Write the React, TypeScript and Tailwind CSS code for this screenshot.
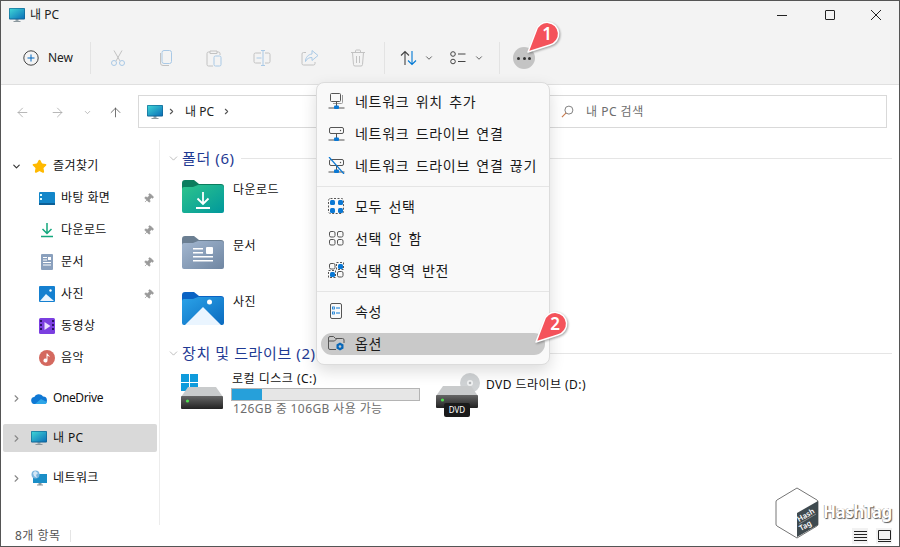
import type { ReactNode } from "react";
import { ChevronDown, ChevronRight, ArrowLeft, ArrowRight, ArrowUp, Pin, Star } from "lucide-react";

function PcIcon({ id, className }: { id: string; className: string }) {
  return (
    <svg viewBox="0 0 16 16" className={className}>
      <defs>
        <linearGradient id={id} x1="0" y1="0" x2="1" y2="1">
          <stop offset="0" stopColor="#3fd6d6" />
          <stop offset="1" stopColor="#0b6fb8" />
        </linearGradient>
      </defs>
      <path d="M6.5 12h3v2h-3z" fill="#9aa7ad" />
      <path d="M4.5 14h7v1h-7z" fill="#8b979d" />
      <rect x="0" y="1" width="16" height="11.5" rx="1" fill="#0f5f8f" />
      <rect x="0.6" y="1.6" width="14.8" height="10" fill={`url(#${id})`} />
    </svg>
  );
}

function FolderIcon({ id, tab, from, to, children }: { id: string; tab: string; from: string; to: string; children: ReactNode }) {
  return (
    <svg viewBox="0 0 42 33" className="w-[42px] h-[33px] shrink-0">
      <defs>
        <linearGradient id={id} x1="0" y1="0" x2="1" y2="1">
          <stop offset="0" stopColor={from} />
          <stop offset="1" stopColor={to} />
        </linearGradient>
      </defs>
      <path d="M0 3a3 3 0 0 1 3-3h9l5 4h22a3 3 0 0 1 3 3v6H0z" fill={tab} />
      <path d="M0 9a2 2 0 0 1 2-2h9l5-2h23a3 3 0 0 1 3 3v23a2 2 0 0 1-2 2H2a2 2 0 0 1-2-2z" fill={`url(#${id})`} />
      {children}
    </svg>
  );
}

function DriveIcon({ children }: { children?: ReactNode }) {
  return (
    <svg viewBox="0 0 42 24" className="w-[42px] h-[24px] absolute left-0 bottom-0">
      <defs>
        <linearGradient id="drive-front" x1="0" y1="0" x2="0" y2="1">
          <stop offset="0" stopColor="#666" />
          <stop offset="1" stopColor="#222" />
        </linearGradient>
      </defs>
      <path d="M7 1h28l7 10H0z" fill="#c9cbcc" />
      <rect x="0" y="10" width="42" height="13" rx="1" fill="url(#drive-front)" />
      <circle cx="6.500" cy="15" r="1.600" fill="#4fe04f" />
      {children}
    </svg>
  );
}

function Badge({ num, className }: { num: string; className: string }) {
  return (
    <div className={`absolute w-[40px] h-[38px] ${className}`}>
      <svg viewBox="0 0 40 38" className="w-[40px] h-[38px] drop-shadow-[1px_1px_1px_rgba(0,0,0,0.35)]">
        <path d="M14 12A11.500 11.500 0 1 1 28 26L6 33Z" fill="#f4535b" stroke="#fff" strokeWidth="1.500" strokeLinejoin="round" />
      </svg>
      <span className="absolute left-[14px] top-[4px] w-[22px] text-center text-white text-[17px] font-semibold leading-[22px]">{num}</span>
    </div>
  );
}

function ToolIcon({ children, className = "" }: { children: ReactNode; className?: string }) {
  return (
    <svg viewBox="0 0 18 18" fill="none" strokeWidth="1" className={`w-[18px] h-[18px] shrink-0 ${className}`}>
      {children}
    </svg>
  );
}

function Divider() {
  return <div className="w-px h-[32px] bg-[#e3e3e3] shrink-0" />;
}

function ToolSlot({ children }: { children: ReactNode }) {
  return <div className="w-[48px] flex justify-center shrink-0">{children}</div>;
}

function Toolbar() {
  return (
    <div className="h-[55px] pt-[3px] flex items-center pl-[22px] shrink-0">
      <svg viewBox="0 0 16 16" className="w-[16px] h-[16px] shrink-0" fill="none">
        <circle cx="8" cy="8" r="7.200" stroke="#444" />
        <path d="M8 4.500v7M4.500 8h7" stroke="#0067c0" />
      </svg>
      <span className="ml-[9px] w-[42px] text-[12px] text-[#222] tracking-[-0.1px]">New</span>
      <Divider />
      <div className="flex ml-[3px]">
        <ToolSlot>
          <ToolIcon>
            <path d="M5 1.500L11 12M13 1.500L7 12" stroke="#c2c2c2" />
            <circle cx="5" cy="14" r="2.500" stroke="#a9c9e6" />
            <circle cx="13" cy="14" r="2.500" stroke="#a9c9e6" />
          </ToolIcon>
        </ToolSlot>
        <ToolSlot>
          <ToolIcon>
            <rect x="5" y="1.500" width="9.500" height="13" rx="2" stroke="#a9c9e6" />
            <path d="M3.500 4v10a2.500 2.500 0 0 0 2.500 2.500h6" stroke="#c2c2c2" />
          </ToolIcon>
        </ToolSlot>
        <ToolSlot>
          <ToolIcon>
            <path d="M5 3H3.500A1.500 1.500 0 0 0 2 4.500v11A1.500 1.500 0 0 0 3.500 17H8M12 3h1.500A1.500 1.500 0 0 1 15 4.500V6M5 2h7v2.500H5z" stroke="#c2c2c2" />
            <rect x="9" y="7" width="7" height="10" rx="1.500" stroke="#a9c9e6" />
          </ToolIcon>
        </ToolSlot>
        <ToolSlot>
          <ToolIcon>
            <path d="M8 4H2.500A1.500 1.500 0 0 0 1 5.500v7A1.500 1.500 0 0 0 2.500 14H8M12 4h3.500A1.500 1.500 0 0 1 17 5.500v7a1.500 1.500 0 0 1-1.500 1.500H12" stroke="#c2c2c2" />
            <path d="M8 1.500h4M8 16.500h4M10 1.500v15M3.500 9h5" stroke="#a9c9e6" />
          </ToolIcon>
        </ToolSlot>
        <ToolSlot>
          <ToolIcon>
            <path d="M5 3.500H2.500A1.500 1.500 0 0 0 1 5v9.500A1.500 1.500 0 0 0 2.500 16h10a1.500 1.500 0 0 0 1.500-1.500V13" stroke="#c2c2c2" />
            <path d="M11 1.500l6 5-6 5V8.500c-3 0-5 1-6.500 4 0-4 2.500-7 6.500-7.500z" stroke="#a9c9e6" />
          </ToolIcon>
        </ToolSlot>
        <ToolSlot>
          <ToolIcon>
            <path d="M2 3.500h14M6.500 3.500V2a1 1 0 0 1 1-1h3a1 1 0 0 1 1 1v1.500M3.500 3.500l1 12a1.500 1.500 0 0 0 1.500 1.500h6a1.500 1.500 0 0 0 1.500-1.500l1-12M7.500 7v7M10.500 7v7" stroke="#c2c2c2" />
          </ToolIcon>
        </ToolSlot>
      </div>
      <div className="ml-[2px]">
        <Divider />
      </div>
      <div className="flex items-center ml-[15px]">
        <svg viewBox="0 0 18 16" className="w-[18px] h-[16px]" fill="none">
          <path d="M5 15V1.500M1 5.500l4-4 4 4" stroke="#444" strokeWidth="1.100" />
          <path d="M12 1v13.500M8 10.500l4 4 4-4" stroke="#0078d4" strokeWidth="1.100" />
        </svg>
        <ChevronDown className="w-[10px] h-[10px] ml-[6px] text-[#444]" strokeWidth={2} />
        <svg viewBox="0 0 16 14" className="w-[16px] h-[14px] ml-[16px]" fill="none" stroke="#444">
          <circle cx="3" cy="3" r="2.300" />
          <circle cx="3" cy="10.500" r="2.300" />
          <path d="M8 3h7.500M8 10.500h7.500" />
        </svg>
        <ChevronDown className="w-[10px] h-[10px] ml-[8px] text-[#444]" strokeWidth={2} />
      </div>
      <div className="ml-[15px]">
        <Divider />
      </div>
      <div className="ml-[13px] w-[22px] h-[22px] rounded-full bg-[#c4c4c4] flex items-center justify-center gap-[2.500px]">
        <span className="w-[3px] h-[3px] rounded-full bg-[#333]" />
        <span className="w-[3px] h-[3px] rounded-full bg-[#333]" />
        <span className="w-[3px] h-[3px] rounded-full bg-[#333]" />
      </div>
    </div>
  );
}

function AddressRow() {
  return (
    <div className="h-[55px] flex items-start pt-[10px] shrink-0 bg-white">
      <div className="flex items-center h-[33px] pt-[1px] pl-[14px] w-[137px] shrink-0">
        <ArrowLeft className="w-[15px] h-[15px] text-[#a8a8a8]" strokeWidth={1.300} />
        <ArrowRight className="w-[15px] h-[15px] ml-[20px] text-[#a8a8a8]" strokeWidth={1.300} />
        <ChevronDown className="w-[9px] h-[9px] ml-[18px] text-[#a8a8a8]" strokeWidth={2} />
        <ArrowUp className="w-[15px] h-[15px] ml-[16px] text-[#555]" strokeWidth={1.300} />
      </div>
      <div className="flex items-center h-[33px] w-[412px] border border-[#d9d9d9] border-r-0 pl-[8px] shrink-0">
        <PcIcon id="pc-address" className="w-[16px] h-[16px]" />
        <ChevronRight className="w-[9px] h-[9px] ml-[4px] text-[#555]" strokeWidth={3} />
        <span className="ml-[9px] text-[12px] text-[#222]">내 PC</span>
        <ChevronRight className="w-[9px] h-[9px] ml-[8px] text-[#555]" strokeWidth={3} />
      </div>
      <div className="flex items-center h-[33px] w-[337px] border border-[#d9d9d9] border-l-0 pl-[11px] shrink-0">
        <svg viewBox="0 0 14 14" className="w-[13px] h-[13px]" fill="none">
          <circle cx="8.500" cy="5.500" r="4.300" stroke="#777" />
          <path d="M5.500 8.500L1 13" stroke="#c9794a" strokeWidth="1.200" />
        </svg>
        <span className="ml-[12px] text-[12px] text-[#6d6d6d] tracking-[0.5px]">내 PC 검색</span>
      </div>
    </div>
  );
}

function NavRow({ icon, label, chevron, pinned, active, indent }: { icon: ReactNode; label: string; chevron?: "down" | "right"; pinned?: boolean; active?: boolean; indent?: boolean }) {
  return (
    <div className="h-[32px] flex items-center relative">
      {active && <div className="absolute left-[2px] right-[2px] top-[2px] h-[28px] rounded-[2px] bg-[#d9d9d9]" />}
      <div className={`relative flex items-center ${indent ? "pl-[38px]" : "pl-[10px]"}`}>
        {chevron === "down" && <ChevronDown className="w-[11px] h-[11px] text-[#333] mr-[9px]" strokeWidth={2.500} />}
        {chevron === "right" && <ChevronRight className="w-[11px] h-[11px] text-[#888] mr-[9px]" strokeWidth={2.500} />}
        {icon}
        <span className={`text-[12px] text-[#111] ml-[6px] ${label === "OneDrive" ? "tracking-[-0.4px]" : "tracking-[0.4px]"}`}>{label}</span>
      </div>
      {pinned && <Pin className="absolute right-[5px] w-[11px] h-[11px] text-[#9a9a9a] fill-[#9a9a9a] rotate-45" strokeWidth={1.500} />}
    </div>
  );
}

function Sidebar() {
  return (
    <div className="w-[159px] shrink-0 border-r border-[#ececec] pt-[10px] bg-white">
      <NavRow chevron="down" label="즐겨찾기" icon={<Star className="ml-[1px] w-[15px] h-[15px] text-[#ffb900] fill-[#ffb900]" />} />
      <NavRow
        indent
        pinned
        label="바탕 화면"
        icon={
          <svg viewBox="0 0 16 13" className="w-[16px] h-[13px]">
            <rect width="16" height="13" rx="1" fill="#1286c9" />
            <rect x="1" y="2" width="2" height="2" fill="#dff" />
            <rect x="1" y="6" width="2" height="2" fill="#dff" />
            <rect y="11" width="16" height="2" fill="#0c5f96" />
          </svg>
        }
      />
      <NavRow
        indent
        pinned
        label="다운로드"
        icon={
          <svg viewBox="0 0 16 16" className="w-[16px] h-[16px]" fill="none" stroke="#14a87e" strokeWidth="1.500">
            <path d="M8 1v10M3.500 7l4.500 4.500L12.500 7M2 14.500h12" />
          </svg>
        }
      />
      <NavRow
        indent
        pinned
        label="문서"
        icon={
          <svg viewBox="0 0 16 16" className="w-[16px] h-[16px]">
            <rect x="2" width="12" height="16" rx="1" fill="#8aa0bd" />
            <path d="M4 3h4v1H4zM4 5.500h4v1H4zM4 8h8v1H4zM4 10.500h8v1H4z" fill="#fff" />
            <rect x="9" y="3" width="3" height="3" fill="#fff" />
          </svg>
        }
      />
      <NavRow
        indent
        pinned
        label="사진"
        icon={
          <svg viewBox="0 0 16 16" className="w-[16px] h-[16px]">
            <rect width="16" height="16" rx="1" fill="#1580d0" />
            <path d="M1 15l6-7 8 7z" fill="#eaf5ff" />
            <circle cx="11.500" cy="4.500" r="1.200" fill="#fff" />
          </svg>
        }
      />
      <NavRow
        indent
        label="동영상"
        icon={
          <svg viewBox="0 0 16 16" className="w-[16px] h-[16px]">
            <rect width="16" height="16" rx="1.500" fill="#7b3fe0" />
            <path d="M5.500 4v8l6-4z" fill="#e9ddff" />
            <path d="M1 2h2v2H1zM1 6h2v2H1zM1 10h2v2H1zM13 2h2v2h-2zM13 6h2v2h-2zM13 10h2v2h-2z" fill="#2a1266" />
          </svg>
        }
      />
      <NavRow
        indent
        label="음악"
        icon={
          <svg viewBox="0 0 16 16" className="w-[16px] h-[16px]">
            <circle cx="8" cy="8" r="8" fill="#d4695f" />
            <path d="M7.500 3.500h1v7a2 2 0 1 1-1-1.700zM8.500 3.500c.5 1.500 2 2 2.500 3.500-1-.7-2-1-2.500-1z" fill="#fff" />
          </svg>
        }
      />
      <div className="h-[8px]" />
      <NavRow
        chevron="right"
        label="OneDrive"
        icon={
          <svg viewBox="0 0 16 11" className="w-[16px] h-[11px]">
            <path d="M4 11a3.500 3.500 0 0 1-.6-7A5 5 0 0 1 12 3.500 3.800 3.800 0 0 1 13 11z" fill="#0f78d4" />
            <path d="M4 11l6-5 6 3a2.500 2.500 0 0 1-3 2z" fill="#2ea6e8" />
          </svg>
        }
      />
      <div className="h-[8px]" />
      <NavRow chevron="right" active label="내 PC" icon={<PcIcon id="pc-nav" className="w-[16px] h-[16px]" />} />
      <div className="h-[8px]" />
      <NavRow
        chevron="right"
        label="네트워크"
        icon={
          <svg viewBox="0 0 16 16" className="w-[16px] h-[16px]">
            <rect x="2" y="4" width="14" height="9" fill="#1a8ec7" />
            <path d="M7.500 13h3v1.500h-3zM6 14.500h6v1H6z" fill="#8b979d" />
            <circle cx="4.500" cy="4.500" r="4" fill="#7cb5de" />
            <path d="M2 3l2-2 3 2-2 2 1 3-3-2z" fill="#d5e7f5" />
          </svg>
        }
      />
    </div>
  );
}

function SectionHeader({ title }: { title: string }) {
  return (
    <div className="h-[20px] flex items-center">
      <ChevronDown className="w-[13px] h-[13px] text-[#9a9a9a] ml-[7px] mr-[2px] shrink-0" strokeWidth={1.200} />
      <span className="text-[15px] text-[#1f3a93] whitespace-nowrap tracking-[0.6px]">{title}</span>
      <div className="flex-1 h-px bg-[#e5e5e5] ml-[6px]" />
    </div>
  );
}

function FolderRow({ label, icon }: { label: string; icon: ReactNode }) {
  return (
    <div className="h-[56px] flex pl-[22px]">
      <div className="mt-[13px]">{icon}</div>
      <span className="ml-[9px] mt-[15px] text-[12px] text-[#111] leading-[16px] tracking-[0.5px]">{label}</span>
    </div>
  );
}

function Content() {
  return (
    <div className="flex-1 pt-[8px] pr-[7px] bg-white min-w-0">
      <SectionHeader title="폴더 (6)" />
      <div className="-mt-[1px] h-[175px]">
        <FolderRow
          label="다운로드"
          icon={
            <FolderIcon id="f-dl" tab="#0b7d5e" from="#2ec48c" to="#00989c">
              <path d="M21 12v12M15.500 18.500l5.500 5.500 5.500-5.500M14 28h14" stroke="#fff" strokeWidth="1.800" fill="none" />
            </FolderIcon>
          }
        />
        <FolderRow
          label="문서"
          icon={
            <FolderIcon id="f-doc" tab="#6b7f92" from="#a3b7d0" to="#6f86a2">
              <path d="M11 12h10v1.500H11zM11 16h10v1.500H11zM11 20h20v1.500H11zM11 24h20v1.500H11z" fill="#fff" />
              <rect x="24" y="11" width="7" height="7" rx="1" fill="#fff" />
            </FolderIcon>
          }
        />
        <FolderRow
          label="사진"
          icon={
            <FolderIcon id="f-pic" tab="#0a63c4" from="#2ba3e8" to="#0a6abf">
              <path d="M3 33l18-18 18 18z" fill="#eaf5ff" />
              <circle cx="27.500" cy="10" r="2.500" fill="#fff" />
            </FolderIcon>
          }
        />
      </div>
      <div className="mt-[1px]">
        <SectionHeader title="장치 및 드라이브 (2)" />
      </div>
      <div className="flex pl-[21px] mt-[11px]">
        <div className="relative w-[43px] h-[36px] shrink-0">
          <svg viewBox="0 0 17 17" className="absolute left-0 top-0 w-[17px] h-[17px]">
            <path d="M0 0h8v8H0zM9 0h8v8H9zM0 9h8v8H0zM9 9h8v8H9z" fill="#0f9bdc" />
          </svg>
          <DriveIcon />
        </div>
        <div className="ml-[7px] w-[189px]">
          <div className="text-[12px] text-[#111] leading-[14px] -mt-[2px] ml-[1px] tracking-[0.5px] whitespace-nowrap">로컬 디스크 (C:)</div>
          <div className="h-[13px] mt-[2px] border border-[#b4b4b4] bg-[#e6e6e6]">
            <div className="h-full w-[30px] bg-[#26a0da]" />
          </div>
          <div className="text-[12px] text-[#6d6d6d] leading-[14px] mt-[1px] ml-[2px] whitespace-nowrap tracking-[0.4px]">126GB 중 106GB 사용 가능</div>
        </div>
        <div className="relative w-[45px] h-[44px] ml-[16px] -mt-[1px] shrink-0">
          <svg viewBox="0 0 20 20" className="absolute left-[24px] top-0 w-[20px] h-[20px]">
            <circle cx="10" cy="10" r="10" fill="#cfd2d4" />
            <circle cx="10" cy="10" r="3" fill="#f1f2f3" />
            <circle cx="10" cy="10" r="1.300" fill="#b5b8ba" />
          </svg>
          <div className="absolute left-0 top-[12px] w-[42px] h-[24px]">
            <DriveIcon />
          </div>
          <div className="absolute left-[8px] top-[30px] w-[26px] h-[14px] rounded-[2px] bg-[#1a1a1a] text-white text-[8px] leading-[14px] text-center">DVD</div>
        </div>
        <div className="ml-[5px] mt-[4px] text-[12px] text-[#111] leading-[14px] whitespace-nowrap tracking-[0.45px]">DVD 드라이브 (D:)</div>
      </div>
    </div>
  );
}

function MenuRow({ icon, label, active }: { icon: ReactNode; label: string; active?: boolean }) {
  return (
    <div className="h-[32px] flex items-center px-[4px]">
      <div className={`h-[22px] w-full flex items-center pl-[6px] rounded-full ${active ? "bg-[#c9c9c9] mt-[1px]" : ""}`}>
        <div className="w-[18px] flex justify-center shrink-0">{icon}</div>
        <span className="ml-[10px] text-[14px] text-[#1a1a1a] tracking-[0.7px] [word-spacing:2px]">{label}</span>
      </div>
    </div>
  );
}

function MenuSep() {
  return <div className="h-px bg-[#e5e5e5] mt-[5px] mb-[3px]" />;
}

function SelectGrid({ on }: { on: number[] }) {
  const cells = [
    [1, 1],
    [9, 1],
    [1, 9],
    [9, 9],
  ];
  return (
    <svg viewBox="0 0 16 16" className="w-[16px] h-[16px]" fill="none">
      {on.length === 4 && <rect x="0.500" y="0.500" width="15" height="15" rx="2" stroke="#555" strokeDasharray="2 1.500" />}
      {on.length === 2 && <path d="M8.500 0.500h7v7h-7zM0.500 8.500h7v7h-7z" stroke="#555" strokeDasharray="2 1.500" />}
      {cells.map(([x, y], i) =>
        on.includes(i) ? (
          <rect key={i} x={x + 1} y={y + 1} width="5" height="5" rx="1.500" fill="#0a78d4" />
        ) : (
          <rect key={i} x={x + 0.5} y={y + 0.5} width="5.500" height="5.500" rx="1.500" stroke="#555" />
        ),
      )}
    </svg>
  );
}

function NetIcon({ drive, off }: { drive?: boolean; off?: boolean }) {
  return (
    <svg viewBox="0 0 17 17" className="w-[17px] h-[17px]" fill="none">
      {drive ? (
        <rect x="1.500" y="2.500" width="14" height="6" rx="1.500" stroke="#555" />
      ) : (
        <>
          <rect x="2.500" y="0.500" width="10" height="8" rx="1" stroke="#555" />
          <path d="M14.500 2v7.500a1 1 0 0 1-1 1H5" stroke="#999" />
        </>
      )}
      {drive && <circle cx="12.500" cy="5.500" r="0.700" fill="#555" />}
      <path d="M8.500 9v4M.500 15h16" stroke="#555" />
      <rect x="6" y="12.500" width="5" height="3.500" rx="1" fill="#0a78d4" />
      {off && <path d="M1 0l15 17" stroke="#0a78d4" strokeWidth="1.200" />}
    </svg>
  );
}

function MoreMenu() {
  return (
    <div className="absolute left-[315px] top-[81px] w-[234px] h-[283px] rounded-[8px] border border-[#dcdcdc] bg-[#f9f9f9] shadow-[0_6px_16px_rgba(0,0,0,0.14)] pt-[2px]">
      <MenuRow icon={<NetIcon />} label="네트워크 위치 추가" />
      <MenuRow icon={<NetIcon drive />} label="네트워크 드라이브 연결" />
      <MenuRow icon={<NetIcon drive off />} label="네트워크 드라이브 연결 끊기" />
      <MenuSep />
      <MenuRow icon={<SelectGrid on={[0, 1, 2, 3]} />} label="모두 선택" />
      <MenuRow icon={<SelectGrid on={[]} />} label="선택 안 함" />
      <MenuRow icon={<SelectGrid on={[1, 2]} />} label="선택 영역 반전" />
      <MenuSep />
      <MenuRow
        icon={
          <svg viewBox="0 0 12 16" className="w-[12px] h-[16px]" fill="none">
            <rect x="0.500" y="0.500" width="11" height="15" rx="1.500" stroke="#555" />
            <rect x="2.500" y="4" width="2" height="2" stroke="#0a78d4" strokeWidth="0.800" />
            <rect x="2.500" y="9" width="2" height="2" stroke="#0a78d4" strokeWidth="0.800" />
            <path d="M6 5h4M6 10h4" stroke="#0a78d4" />
          </svg>
        }
        label="속성"
      />
      <MenuRow
        active
        icon={
          <svg viewBox="0 0 17 15" className="w-[17px] h-[15px]" fill="none">
            <path d="M8 13.500H2A1.500 1.500 0 0 1 .500 12V2A1.500 1.500 0 0 1 2 .500h3.500l2 2h7A1.500 1.500 0 0 1 16 4v3M.500 5h6l2-2" stroke="#555" />
            <path d="M12 6.500l3.500 2v4l-3.500 2-3.500-2v-4z" fill="#0a68b8" />
            <circle cx="12" cy="10.500" r="1.300" fill="#c9c9c9" />
          </svg>
        }
        label="옵션"
      />
    </div>
  );
}

function WatermarkLogo() {
  return (
    <div className="absolute left-[774px] top-[486px] flex items-center">
      <svg viewBox="0 0 44 52" className="w-[44px] h-[52px]">
        <path d="M22 1l20 12a2 2 0 0 1 1 2v22a2 2 0 0 1-1 2L22 51 2 39a2 2 0 0 1-1-2V15a2 2 0 0 1 1-2z" fill="#fff" stroke="#666" strokeWidth="0.900" />
        <path d="M22 26l21-12v24L22 50z" fill="#3f4a4f" />
        <text x="0" y="0" transform="translate(24 35) rotate(-30)" fill="#fff" fontSize="7.500" fontWeight="600">Hash</text>
        <path d="M24 37l17-10" stroke="#c8c8c8" strokeWidth="0.500" />
        <text x="0" y="0" transform="translate(26 44) rotate(-30)" fill="#fff" fontSize="7.500" fontWeight="600">Tag</text>
      </svg>
      <span className="ml-[4px] -mt-[2px] text-[17px] font-bold tracking-[-0.5px] text-white [text-shadow:1px_1px_1px_#555,-0.5px_0_0.5px_#888]">HashTag</span>
    </div>
  );
}

function StatusBar() {
  return (
    <div className="h-[21px] shrink-0 flex items-center bg-white pl-[14px] relative">
      <span className="text-[12px] text-[#555] tracking-[0.5px]">8개 항목</span>
      <div className="ml-[9px] w-px h-[12px] bg-[#e5e5e5]" />
      <div className="ml-auto mr-[7px] flex items-center gap-[8px]">
        <div className="w-[16px] h-[16px] bg-[#f2f2f2] flex items-center justify-center">
          <svg viewBox="0 0 13 11" className="w-[13px] h-[11px]" stroke="#222" fill="none">
            <path d="M0 1.500h13M0 4.500h13M0 7.500h13M0 10.500h13" />
          </svg>
        </div>
        <div className="w-[16px] h-[16px] bg-[#f2f2f2] flex items-center justify-center">
          <svg viewBox="0 0 13 12" className="w-[13px] h-[12px]" stroke="#222" fill="none">
            <path d="M.5.500h12v9H.5zM0 11.500h13" />
          </svg>
        </div>
      </div>
    </div>
  );
}

export default function App() {
  return (
    <div className="relative w-[900px] h-[547px] overflow-hidden border border-[#555] flex flex-col bg-white font-['Noto_Sans','Noto_Sans_CJK_KR',sans-serif]">
      {/* Title + command bar */}
      <div className="bg-[#f3f3f3] border-b border-[#e0e0e0] h-[84px] shrink-0 flex flex-col">
        <div className="h-[28px] flex items-center pl-[8px] shrink-0">
          <PcIcon id="pc-title" className="w-[16px] h-[16px]" />
          <span className="ml-[5px] text-[12px] text-[#222]">내 PC</span>
          <div className="ml-auto flex items-center">
            <div className="w-[50px] flex justify-center">
              <div className="w-[10px] h-px bg-[#222]" />
            </div>
            <div className="w-[46px] flex justify-center">
              <div className="w-[10px] h-[10px] border border-[#222] rounded-[1px]" />
            </div>
            <div className="w-[46px] pr-[1px] flex justify-center">
              <svg viewBox="0 0 10 10" className="w-[10px] h-[10px]" stroke="#222" fill="none">
                <path d="M0 0l10 10M10 0L0 10" />
              </svg>
            </div>
          </div>
        </div>
        <Toolbar />
      </div>
      <AddressRow />
      <div className="flex flex-1 min-h-0">
        <Sidebar />
        <Content />
      </div>
      <StatusBar />
      <MoreMenu />
      <Badge num="1" className="left-[521px] top-[18px]" />
      <Badge num="2" className="left-[529px] top-[308px]" />
      <WatermarkLogo />
    </div>
  );
}
